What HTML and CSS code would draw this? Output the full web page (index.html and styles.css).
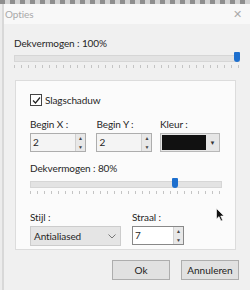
FILE: index.html
```html
<!DOCTYPE html>
<html>
<head>
    <meta charset="UTF-8">
    <title>Opties</title>
    <link rel="stylesheet" href="styles.css">
</head>
<body>
    <div class="top-strip"></div>
    <div class="window">
        <div class="titlebar">
            <span class="title">Opties</span>
            <span class="close">&#x2715;</span>
        </div>

        <div class="content">
            <div class="label">Dekvermogen : 100%</div>
            <div class="slider slider-wide">
                <div class="track"></div>
                <div class="thumb" style="left: 100%"></div>
            </div>
            <div class="ticks ticks-wide"></div>

            <div class="panel">
                <label class="check-row">
                    <span class="checkbox">
                        <svg width="9" height="9" viewBox="0 0 9 9"><path d="M1 4.5 L3.5 7 L8 1.5" fill="none" stroke="#222" stroke-width="1.2"/></svg>
                    </span>
                    <span>Slagschaduw</span>
                </label>

                <div class="field-row">
                    <div class="field field-x">
                        <div class="label">Begin X :</div>
                        <div class="spin">
                            <span class="spin-value">2</span>
                            <span class="spin-buttons"><span>&#9650;</span><span>&#9660;</span></span>
                        </div>
                    </div>
                    <div class="field field-y">
                        <div class="label">Begin Y :</div>
                        <div class="spin">
                            <span class="spin-value">2</span>
                            <span class="spin-buttons"><span>&#9650;</span><span>&#9660;</span></span>
                        </div>
                    </div>
                    <div class="field field-color">
                        <div class="label">Kleur :</div>
                        <div class="color-pick">
                            <span class="swatch"></span>
                            <span class="color-arrow">&#9660;</span>
                        </div>
                    </div>
                </div>

                <div class="label label-opacity">Dekvermogen : 80%</div>
                <div class="slider slider-inner">
                    <div class="track"></div>
                    <div class="thumb" style="left: 77%"></div>
                </div>
                <div class="ticks ticks-inner"></div>

                <div class="field-row bottom-row">
                    <div class="field field-style">
                        <div class="label">Stijl :</div>
                        <div class="select">
                            <span>Antialiased</span>
                            <svg width="8" height="5" viewBox="0 0 8 5"><path d="M0.5 0.5 L4 4 L7.5 0.5" fill="none" stroke="#777" stroke-width="1"/></svg>
                        </div>
                    </div>
                    <div class="field field-radius">
                        <div class="label">Straal :</div>
                        <div class="spin spin-white">
                            <span class="spin-value">7</span>
                            <span class="spin-buttons"><span>&#9650;</span><span>&#9660;</span></span>
                        </div>
                    </div>
                </div>

                <svg class="cursor" width="9" height="14" viewBox="0 0 9 14"><path d="M0.5 0.5 L0.5 11 L3 8.6 L5 13 L6.6 12.3 L4.7 8 L8 8 Z" fill="#111" stroke="#fff" stroke-width="0.6"/></svg>
            </div>

            <div class="buttons">
                <button class="btn">Ok</button>
                <button class="btn">Annuleren</button>
            </div>
        </div>
    </div>
</body>
</html>
```

FILE: styles.css
```css
body {
    margin: 0;
    width: 250px;
    height: 290px;
    overflow: hidden;
    background-color: #ececec;
    font-family: Lato, "Noto Sans", sans-serif;
    font-size: 10px;
    letter-spacing: -0.1px;
    color: #262626;
}

/* полоска фона над окном */
.top-strip {
    height: 4px;
    background: repeating-linear-gradient(90deg, #8e8e8e 0 5px, #d2d2d2 5px 10px);
}

.window {
    margin-left: 2px;
    border-left: 2px solid #d8d8d8;
    height: 286px;
    background-color: #efefef;
}

.titlebar {
    height: 20px;
    background-color: #f8f8f8;
    display: flex;
    align-items: center;
    justify-content: space-between;
    padding: 0 8px 0 1px;
}

.title {
    color: #a8a8a8;
}

.close {
    color: #aaaaaa;
    font-size: 11px;
}

.content {
    padding: 12px 9px 0 10px;
    background-color: #f0f0f0;
    height: 254px;
}

.label {
    line-height: 14px;
}

.slider {
    position: relative;
    height: 12px;
}

.track {
    position: absolute;
    left: 0;
    right: 0;
    top: 3px;
    height: 5px;
    background-color: #e3e3e3;
    border: 1px solid #d6d6d6;
}

.thumb {
    position: absolute;
    top: 0;
    width: 6px;
    height: 10px;
    margin-left: -6px;
    background-color: #1d6fce;
    border-radius: 1px 1px 3px 3px;
}

.slider-wide {
    margin-top: 2px;
    width: 226px;
}

.ticks {
    height: 3px;
    margin-top: 1px;
    background: repeating-linear-gradient(90deg, #c4c4c4 0 1px, transparent 1px 7px);
}

.ticks-wide {
    width: 226px;
}

.panel {
    position: relative;
    margin: 12px 0 0 1px;
    width: 190px;
    height: 155px;
    padding: 13px 15px 0 14px;
    background-color: #fbfbfb;
    border: 1px solid #dcdcdc;
}

.check-row {
    display: flex;
    align-items: center;
    gap: 3px;
}

.checkbox {
    width: 10px;
    height: 10px;
    border: 1px solid #444444;
    background-color: #ffffff;
    display: flex;
    align-items: center;
    justify-content: center;
}

.field-row {
    display: flex;
    margin-top: 11px;
}

.field .label {
    margin-bottom: 2px;
}

.field-x {
    width: 67px;
}

.field-y {
    width: 64px;
}

.spin {
    width: 54px;
    height: 17px;
    border: 1px solid #adadad;
    background-color: #f4f4f4;
    display: flex;
    justify-content: space-between;
}

.spin-value {
    padding-left: 2px;
    line-height: 17px;
}

.spin-buttons {
    width: 9px;
    display: flex;
    flex-direction: column;
    border-left: 1px solid #d0d0d0;
    background-color: #e8e8e8;
}

.spin-buttons span {
    flex: 1;
    font-size: 5px;
    line-height: 8px;
    text-align: center;
    color: #444444;
}

.color-pick {
    width: 57px;
    height: 17px;
    border: 1px solid #b8b8b8;
    background-color: #e6e6e6;
    display: flex;
    align-items: center;
    padding-left: 1px;
}

.swatch {
    width: 44px;
    height: 15px;
    background-color: #111111;
}

.color-arrow {
    flex: 1;
    font-size: 6px;
    text-align: center;
    color: #333333;
}

.label-opacity {
    margin-top: 9px;
}

.slider-inner {
    margin-top: 3px;
    width: 192px;
}

.bottom-row {
    margin-top: 16px;
}

.field-style {
    width: 102px;
}

.select {
    width: 82px;
    height: 18px;
    border: 1px solid #cccccc;
    background-color: #e5e5e5;
    display: flex;
    align-items: center;
    justify-content: space-between;
    padding: 0 4px 0 3px;
}

.spin-white {
    background-color: #ffffff;
    border-color: #888888;
    width: 50px;
}

.cursor {
    position: absolute;
    left: 200px;
    top: 127px;
}

.buttons {
    display: flex;
    justify-content: flex-end;
    gap: 11px;
    margin-top: 10px;
    padding-right: 2px;
}

.btn {
    width: 58px;
    height: 20px;
    padding: 0;
    font-family: Lato, "Noto Sans", sans-serif;
    font-size: 10px;
    color: #222222;
    background-color: #e1e1e1;
    border: 1px solid #adadad;
}
```
